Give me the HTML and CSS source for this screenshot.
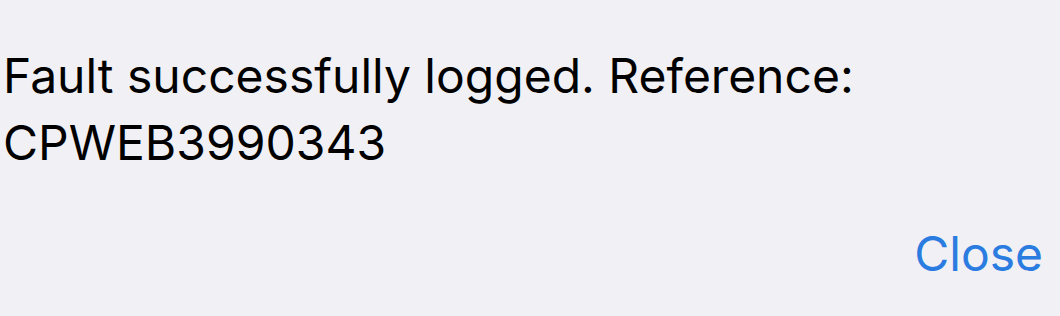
FILE: index.html
```html
<!DOCTYPE html>
<html lang="en">
<head>
    <meta charset="UTF-8">
    <meta name="viewport" content="width=device-width, initial-scale=1.0">
    <title>Fault Logged</title>
    <link rel="stylesheet" href="styles.css">
</head>
<body>
    <div class="dialog">
        <p class="message">Fault successfully logged. Reference: CPWEB3990343</p>
        <div class="actions">
            <a href="#" class="close-link">Close</a>
        </div>
    </div>
</body>
</html>
```

FILE: styles.css
```css
body {
    font-family: Inter, "Noto Sans", sans-serif;
    margin: 0;
    background-color: #f1f0f5;
    color: #000;
}
.dialog {
    width: 1060px;
    height: 316px;
    box-sizing: border-box;
    padding: 42px 17px 0 3px;
}
.message {
    margin: 0;
    width: 900px;
    font-size: 48px;
    line-height: 67px;
}
.actions {
    display: flex;
    justify-content: flex-end;
    margin-top: 53px;
}
.close-link {
    color: #2a7ce0;
    text-decoration: none;
    font-size: 48px;
    line-height: 50px;
}
```
